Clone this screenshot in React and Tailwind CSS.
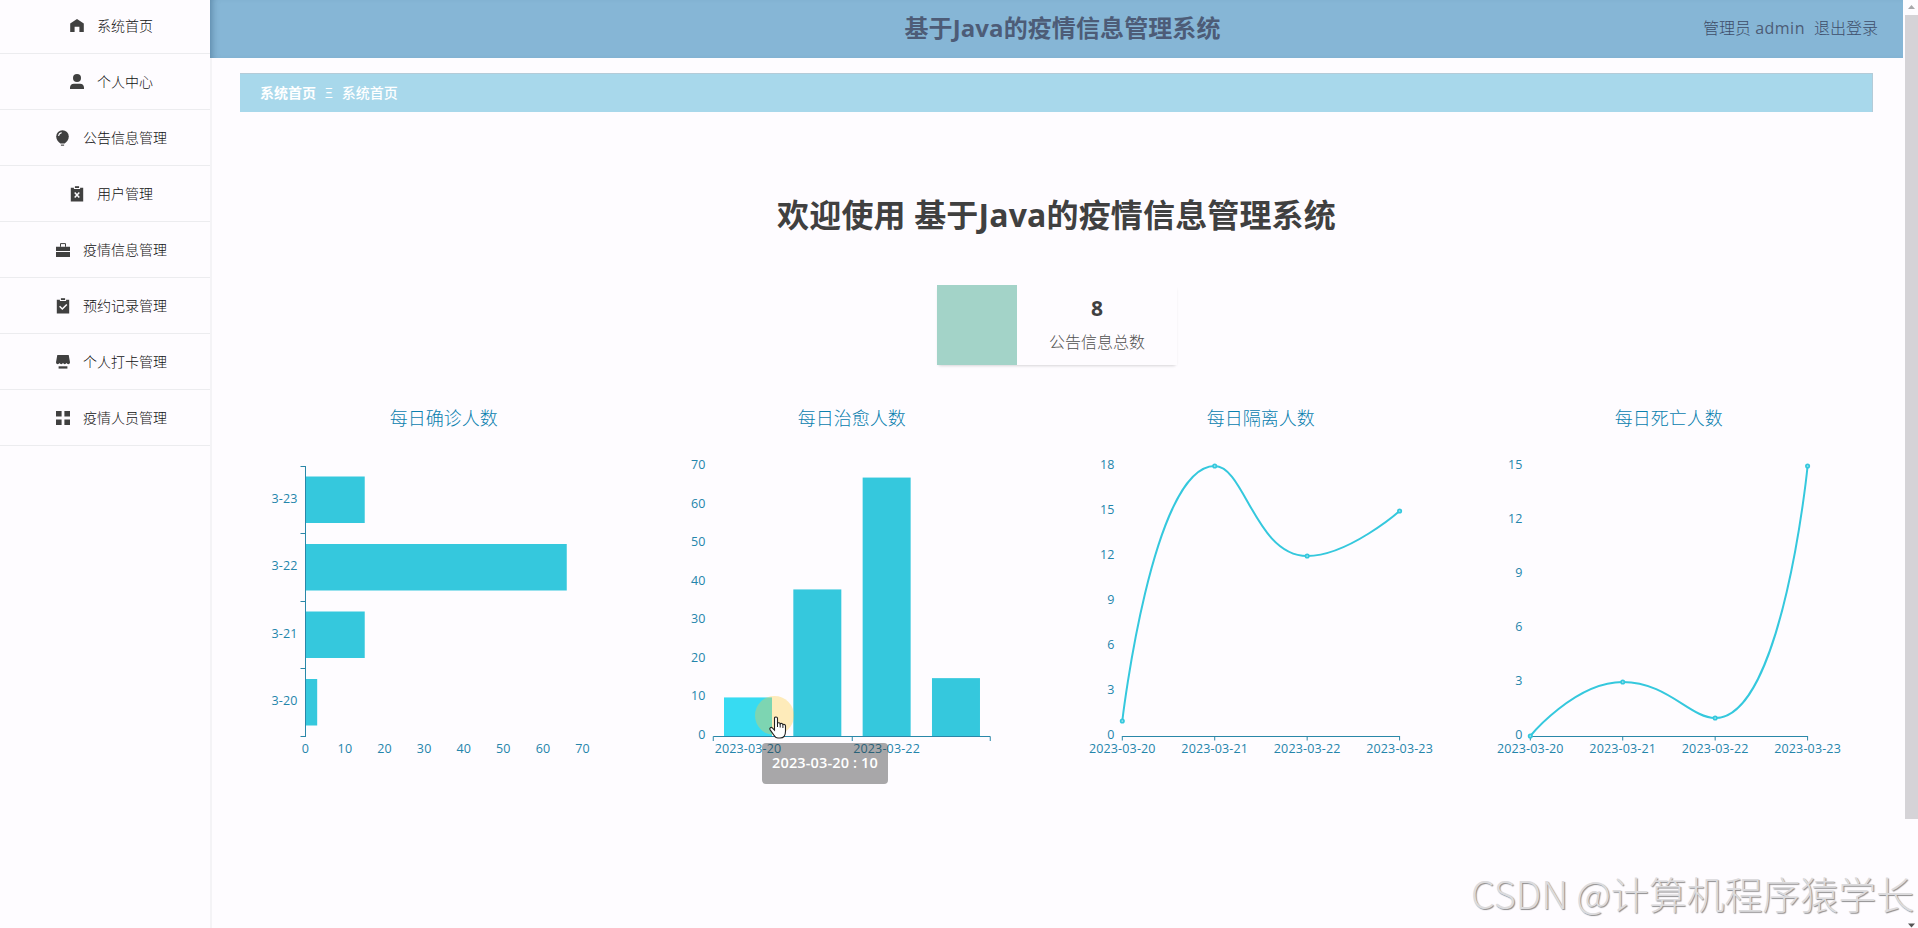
const menus = [
  { name: '系统首页', icon: 'home' },
  { name: '个人中心', icon: 'user' },
  { name: '公告信息管理', icon: 'balloon' },
  { name: '用户管理', icon: 'release' },
  { name: '疫情信息管理', icon: 'cooperation' },
  { name: '预约记录管理', icon: 'claim' },
  { name: '个人打卡管理', icon: 'shop' },
  { name: '疫情人员管理', icon: 'grid' },
];

const DATES = ['2023-03-20', '2023-03-21', '2023-03-22', '2023-03-23'];

// plot area inside every chart
const X0 = 65.3;
const PLOT_W = 277.3;
const Y0 = 70;
const Y1 = 340;
const PLOT_H = Y1 - Y0;

const AXIS = '#2a87a8';
const BAR = '#35c8dd';

function MenuIcon({ name }) {
  return (
    <svg className="h-[14px] w-[14px] shrink-0 overflow-visible" viewBox="0 0 14 14" fill="#404040">
      {name === 'home' && <path d="M7 0 0.2 4.6V13h4.4V7.8h4.8V13h4.4V4.6z" />}
      {name === 'user' && (
        <>
          <circle cx="7" cy="3" r="4" />
          <path d="M0 14v-1.4a4 4 0 0 1 4-3.8h6a4 4 0 0 1 4 3.8V14z" />
        </>
      )}
      {name === 'balloon' && (
        <>
          <path d="M6.5-.8A6.3 6.3 0 0 1 12.8 5.5C12.8 8.6 10.6 11.2 8.6 12.6H4.4C2.4 11.2.2 8.6.2 5.5A6.3 6.3 0 0 1 6.5-.8z" />
          <path d="M2.5 4.8a4 4 0 0 1 3.1-3.2" fill="none" stroke="#fefcff" strokeWidth="1.2" />
          <path d="M4.9 13.6h3.2v1.1H4.9z" />
        </>
      )}
      {(name === 'release' || name === 'claim') && (
        <>
          <path d="M.8.8h3.1v1.3h6.2V.8h3.1v13.7H.8z" />
          <path d="M4.9-.8h4.2V1H4.9z" />
        </>
      )}
      {name === 'release' && <path d="m4.7 5.5 4.6 5M9.3 5.5l-4.6 5" stroke="#fefcff" strokeWidth="1.5" />}
      {name === 'claim' && <path d="m3.6 7.3 2.7 2.7 4.5-4.6" fill="none" stroke="#fefcff" strokeWidth="1.5" />}
      {name === 'cooperation' && (
        <>
          <path d="M4.5 3.8V.6h5v3.2" fill="none" stroke="#404040" strokeWidth="1" />
          <path d="M0 3.7h14V8H0zM0 9h14v5H0z" />
        </>
      )}
      {name === 'shop' && (
        <>
          <path d="M1.3.1h11.4L14 7.3c0 2.3-2.8 2.3-3.5.8-.7 1.5-2.8 1.5-3.5 0-.7 1.5-2.8 1.5-3.5 0C2.8 9.6 0 9.6 0 7.3z" />
          <path d="M2.6 11.3h8.8v2.3H2.6z" />
        </>
      )}
      {name === 'grid' && <path d="M0 0h5.6v5.6H0zM8.4 0H14v5.6H8.4zM0 8.4h5.6V14H0zM8.4 8.4H14V14H8.4z" />}
    </svg>
  );
}

function Label({ x, y, anchor = 'middle', children }) {
  return (
    <text x={x} y={y} textAnchor={anchor} className="fill-[#2485ab] text-[12.5px] tracking-[0.15px]">
      {children}
    </text>
  );
}

function Chart({ title, children }) {
  return (
    <div className="h-[400px] flex-1">
      <svg className="h-full w-full overflow-visible">
        <text x="203.7" y="29" textAnchor="middle" className="fill-[#0a80ae] text-[18px] font-light">{title}</text>
        {children}
      </svg>
    </div>
  );
}

function HorizontalBars({ data, max }) {
  const band = PLOT_H / data.length;
  return (
    <>
      {data.map((v, i) => (
        <g key={i}>
          <rect x={X0} y={Y1 - band * (i + 1) + 10.5} width={(v / max) * PLOT_W} height="46.5" fill={BAR} />
          <Label x="57.5" y={Y1 - band * (i + 0.5) + 3} anchor="end">{DATES[i].slice(6)}</Label>
        </g>
      ))}
      <path d={`M65.5 ${Y0}V${Y1 + 1}`} stroke={AXIS} />
      {[0, 1, 2, 3, 4].map((i) => (
        <path key={i} d={`M60.5 ${Math.floor(Y0 + band * i) + 0.5}h5`} stroke={AXIS} />
      ))}
      {[0, 10, 20, 30, 40, 50, 60, 70].map((v) => (
        <Label key={v} x={X0 + (v / max) * PLOT_W} y="357">{v}</Label>
      ))}
    </>
  );
}

function YLabels({ ticks, max }) {
  return ticks.map((v) => (
    <Label key={v} x="57.5" y={Y1 - (v / max) * PLOT_H + 3} anchor="end">{v}</Label>
  ));
}

function VerticalBars({ data, max }) {
  const band = PLOT_W / data.length;
  return (
    <>
      <YLabels ticks={[0, 10, 20, 30, 40, 50, 60, 70]} max={max} />
      {data.map((v, i) => (
        <rect
          key={i}
          x={X0 + band * i + 10.7}
          y={Y1 - (v / max) * PLOT_H}
          width="48"
          height={(v / max) * PLOT_H}
          fill={i === 0 ? '#37dbf2' : BAR}
        />
      ))}
      <path d="M65.25 345V340.5H342.25V345M204.25 340.5V345" fill="none" stroke={AXIS} />
      <Label x="100" y="357">{DATES[0]}</Label>
      <Label x="238.6" y="357">{DATES[2]}</Label>
    </>
  );
}

const clamp = (v, a, b) => Math.min(Math.max(v, Math.min(a, b)), Math.max(a, b));

// smooth curve that never overshoots its neighbouring points
function smoothPath(pts) {
  let d = `M${pts[0][0]} ${pts[0][1]}`;
  let c0 = pts[0];
  for (let i = 1; i < pts.length; i++) {
    const p = pts[i];
    const prev = pts[i - 1];
    const next = pts[i + 1];
    let c1 = p;
    let nextC0 = p;
    if (next) {
      const lp = Math.hypot(p[0] - prev[0], p[1] - prev[1]);
      const ln = Math.hypot(next[0] - p[0], next[1] - p[1]);
      const r = ln / (ln + lp);
      nextC0 = [0, 1].map((k) => clamp(p[k] + (next[k] - prev[k]) * 0.5 * r, next[k], p[k]));
      c1 = [0, 1].map((k) => clamp(p[k] - ((nextC0[k] - p[k]) * lp) / ln, prev[k], p[k]));
      nextC0 = [0, 1].map((k) => p[k] + ((p[k] - c1[k]) * ln) / lp);
    }
    d += `C${c0[0]} ${c0[1]} ${c1[0]} ${c1[1]} ${p[0]} ${p[1]}`;
    c0 = nextC0;
  }
  return d;
}

function LineChart({ data, max, ticks }) {
  const step = PLOT_W / (data.length - 1);
  const pts = data.map((v, i) => [X0 + step * i, Y1 - (v / max) * PLOT_H]);
  return (
    <>
      <YLabels ticks={ticks} max={max} />
      <path d={`M${X0} ${Y1 + 0.5}h${PLOT_W}`} stroke={AXIS} />
      {pts.map(([x], i) => (
        <g key={i}>
          <path d={`M${x} ${Y1}v4.5`} stroke={AXIS} />
          <Label x={x} y="357">{DATES[i]}</Label>
        </g>
      ))}
      <path d={smoothPath(pts)} fill="none" stroke={BAR} strokeWidth="2" />
      {pts.map(([x, y], i) => (
        <circle key={i} cx={x} cy={y} r="1.7" fill="#a8e6ee" stroke={BAR} strokeWidth="1.7" />
      ))}
    </>
  );
}

export default function App() {
  return (
    <div className="relative flex h-[928px] w-full overflow-hidden bg-[#fefcff] font-['Open_Sans','Noto_Sans_CJK_SC',sans-serif] text-[#404040]">
      {/* 侧边栏 */}
      <aside className="w-[210px] shrink-0 bg-[#fefcff]">
        <ul className="-mt-[2px]">
          {menus.map((m) => (
            <li key={m.name} className="flex h-[56px] items-center justify-center gap-[13px] border-b border-[#ececef] pl-[13px] text-sm font-light text-[#111]">
              <MenuIcon name={m.icon} />
              <span>{m.name}</span>
            </li>
          ))}
        </ul>
      </aside>

      <main className="flex min-w-0 flex-1 flex-col">
        {/* 顶部 */}
        <header className="grid h-[58px] shrink-0 grid-cols-3 items-center bg-[#86b6d6] pr-6 text-[#4d5c77] shadow-[inset_7px_0_7px_-5px_rgba(40,80,110,0.45)]">
          <h1 className="col-start-2 translate-x-[18px] -translate-y-px text-center text-2xl font-bold tracking-[0.1px] whitespace-nowrap">基于Java的疫情信息管理系统</h1>
          <div className="flex -translate-x-px -translate-y-px justify-end gap-[9px] text-base font-light text-[#3e4d69]">
            <span>管理员 <span className="font-normal tracking-[0.5px] text-[#4d5c77]">admin</span></span>
            <span>退出登录</span>
          </div>
        </header>

        <section className="flex flex-1 flex-col border-l-2 border-[#f4f3f6] bg-[#fefcff] pt-[15px] pr-[30px] pl-[28px]">
          <nav className="flex h-[39px] items-center gap-[9px] border-t border-r border-[#b4cbd8] bg-[#a8d8eb] px-5 text-sm text-white">
            <span className="font-bold">系统首页</span>
            <span>Ξ</span>
            <span className="font-medium">系统首页</span>
          </nav>

          <h2 className="mt-[79px] mb-px text-center text-[32px] leading-[48px] font-bold tracking-[0.15px]">欢迎使用 基于Java的疫情信息管理系统</h2>

          <div className="mt-[45px] ml-[697px] flex h-[80px] w-[240px] rounded-sm shadow-[0_2px_3px_-1px_rgba(0,0,0,0.16)]">
            <div className="w-[80px] bg-[#a3d3c8]" />
            <div className="flex flex-1 flex-col items-center bg-[#fefcff] pt-[7px]">
              <strong className="text-[21px] leading-[32px] font-bold text-[#404040]">8</strong>
              <span className="mt-[4px] text-base leading-7 font-light text-[#505050]">公告信息总数</span>
            </div>
          </div>

          <div className="mt-[31px] flex">
            <Chart title="每日确诊人数">
              <HorizontalBars data={[3, 15, 66, 15]} max={70} />
            </Chart>
            <Chart title="每日治愈人数">
              <VerticalBars data={[10, 38, 67, 15]} max={70} />
            </Chart>
            <Chart title="每日隔离人数">
              <LineChart data={[1, 18, 12, 15]} max={18} ticks={[0, 3, 6, 9, 12, 15, 18]} />
            </Chart>
            <Chart title="每日死亡人数">
              <LineChart data={[0, 3, 1, 15]} max={15} ticks={[0, 3, 6, 9, 12, 15]} />
            </Chart>
          </div>
        </section>
      </main>

      {/* 滚动条 */}
      <div className="flex w-[15px] shrink-0 flex-col bg-[#fefcff] pl-[2px]">
        <svg className="h-[15px] w-[13px] shrink-0" viewBox="0 0 13 15"><path d="M3 9 6.5 5 10 9z" fill="#a9a8ab" /></svg>
        <div className="h-[804px] w-full bg-[#d5d3d7]" />
        <svg className="mt-auto h-[12px] w-[13px] shrink-0" viewBox="0 0 13 12"><path d="M3 7.5h7L6.5 11.5z" fill="#555" /></svg>
      </div>

      {/* 提示框 */}
      <div className="absolute top-[743px] left-[762px] z-30 flex h-[41px] w-[126px] items-center justify-center rounded bg-[#323232]/42 pb-[2px] text-[14.5px] font-semibold tracking-[0.15px] whitespace-nowrap text-white">
        2023-03-20 : 10
      </div>
      <div className="absolute top-[696px] left-[755px] z-30 h-[39px] w-[39px] rounded-full bg-[#ffca3a]/35" />
      <svg className="absolute top-[716px] left-[768px] z-40 h-[24px] w-[20px]" viewBox="0 0 20 24">
        <path
          d="M6.5 2.2c0-1.7 3-1.7 3 0v5c.6-.7 2.5-.6 2.7.6.7-.7 2.5-.4 2.7.8.9-.6 2.6-.2 2.6 1.4v5.2c0 3.6-1.8 6.8-5.5 6.8H10c-2 0-3.2-1.2-4.2-3L2 13.6c-.8-1.6 1-2.9 2.3-1.7l2.2 2.3z"
          fill="#fff"
          stroke="#222"
          strokeWidth="1.1"
        />
        <path d="M9.5 7v4M12.2 8v3.5M14.9 8.8V12" stroke="#222" strokeWidth="1" />
      </svg>

      <div className="absolute top-[865px] left-[1471px] z-40 font-['Noto_Sans_CJK_SC',sans-serif] text-[38px] leading-[56px] font-light tracking-[-0.1px] whitespace-nowrap text-[#dcdbdd] [text-shadow:1px_1px_1px_#8d8c8e]">
        CSDN @计算机程序猿学长
      </div>
    </div>
  );
}
